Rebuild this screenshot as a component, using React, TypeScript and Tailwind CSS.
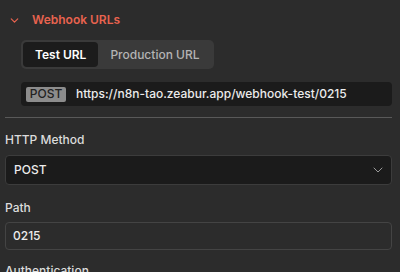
import { ChevronDown } from 'lucide-react';

const font = { fontFamily: 'Inter, "Noto Sans", sans-serif' };

export default function App() {
  return (
    <div className="w-[400px] h-[272px] overflow-hidden bg-[#2c2c2c] pl-[5px] pr-[8px] pt-[11px]" style={font}>
      {/* section header */}
      <div className="flex items-center h-[18px]">
        <ChevronDown size={13} strokeWidth={2.2} className="ml-[3px] text-[#e8634f]" />
        <span className="ml-[11px] text-[12px] font-semibold text-[#e8634f] leading-[18px]">Webhook URLs</span>
      </div>

      <div className="pl-[16px]">
        {/* tabs */}
        <div className="mt-[11px] inline-flex p-[2px] bg-[#3a3a3a] rounded-[5px]">
          <div className="h-[25px] px-[12px] flex items-center bg-[#1c1c1c] rounded-[4px] text-[12px] font-semibold text-white">
            Test URL
          </div>
          <div className="h-[25px] px-[12px] flex items-center text-[12px] font-medium text-[#b4b4b4]">
            Production URL
          </div>
        </div>

        {/* url */}
        <div className="mt-[13px] h-[24px] flex items-center bg-[#1b1b1b] rounded-[4px] pl-[5px]">
          <span className="h-[15px] w-[40px] flex items-center justify-center bg-[#8c8c8c] rounded-[2px] text-[12px] font-medium text-[#222] leading-none">
            POST
          </span>
          <span className="ml-[10px] text-[12px] font-medium text-[#ececec]">
            https://n8n-tao.zeabur.app/webhook-test/0215
          </span>
        </div>
      </div>

      <div className="mt-[11px] h-px bg-[#595959]" />

      <div className="mt-[13px] text-[12px] font-medium leading-[18px] text-[#dcdcdc]">HTTP Method</div>
      <div className="mt-[6px] h-[30px] flex items-center justify-between bg-[#1b1b1b] border border-[#3c3c3c] rounded-[4px] pl-[8px] pr-[5px]">
        <span className="text-[12px] font-medium text-[#ececec]">POST</span>
        <ChevronDown size={16} strokeWidth={1.5} className="text-[#9a9a9a]" />
      </div>

      <div className="mt-[14px] text-[12px] font-medium leading-[18px] text-[#dcdcdc]">Path</div>
      <div className="mt-[5px] h-[28px] flex items-center bg-[#2c2c2c] border border-[#444] rounded-[4px] pl-[7px]">
        <span className="text-[12px] font-medium text-[#ececec]">0215</span>
      </div>

      <div className="mt-[12px] text-[12px] font-medium leading-[18px] text-[#dcdcdc]">Authentication</div>
    </div>
  );
}
